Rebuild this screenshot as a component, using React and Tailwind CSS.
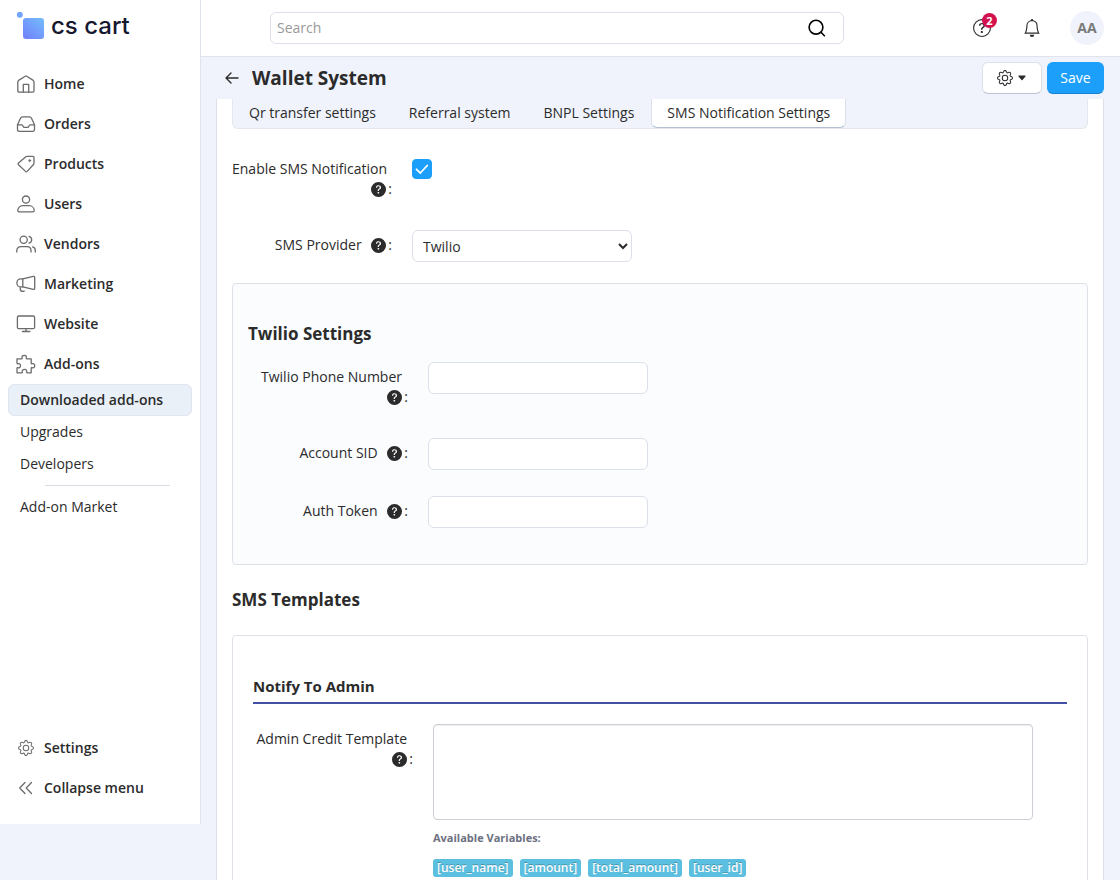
import React, { useState } from 'react';
import {
	BsBell,
	BsCaretDownFill,
	BsGear,
	BsQuestionCircle,
	BsQuestionCircleFill,
} from 'react-icons/bs';

const MenuIcon = ({ children }) => (
	<svg
		viewBox="0 0 20 20"
		className="h-5 w-5 shrink-0 text-[#6b6b6b]"
		fill="none"
		stroke="currentColor"
		strokeWidth="1.3"
		strokeLinecap="round"
		strokeLinejoin="round"
		aria-hidden="true">
		{children}
	</svg>
);

const mainMenu = [
	{
		name: 'Home',
		icon: (
			<>
				<path d="M1.8 16.8V7.9c0-.6.3-1.1.8-1.5L9.2 2.2c.5-.3 1.1-.3 1.6 0l6.4 4.2c.5.4.8.9.8 1.5v8.9c0 .8-.5 1.4-1.3 1.4H3.1c-.8 0-1.3-.6-1.3-1.4z" />
				<path d="M7.3 18.2V10.3h5.4v7.9" />
			</>
		),
	},
	{
		name: 'Orders',
		icon: (
			<>
				<path d="M1.5 10.8l3-6.6c.4-.9 1-1.4 2-1.4h7c1 0 1.6.5 2 1.4l3 6.6v4.7c0 1.1-.7 1.8-1.8 1.8H3.3c-1.1 0-1.8-.7-1.8-1.8z" />
				<path d="M1.5 10.8h4.2c.8 0 1.1.5 1.3 1.2.3.9.8 1.4 1.7 1.4h2.6c.9 0 1.4-.5 1.7-1.4.2-.7.5-1.2 1.3-1.2h4.2" />
			</>
		),
	},
	{
		name: 'Products',
		icon: (
			<>
				<path d="M11 2.3h5.7c.8 0 1.3.5 1.3 1.3v5.7c0 .5-.2.9-.5 1.2l-6.3 6.9c-.5.5-1.2.5-1.7 0l-7-6.7c-.5-.5-.5-1.2 0-1.7l7.3-6.2c.4-.3.8-.5 1.2-.5z" />
				<circle cx="13.7" cy="6.6" r="1" fill="currentColor" strokeWidth="0.6" />
			</>
		),
	},
	{
		name: 'Users',
		icon: (
			<>
				<circle cx="10" cy="5.6" r="3.6" />
				<path d="M1.8 16.6c0-2.8 2.2-4.9 5-4.9h6.4c2.8 0 5 2.1 5 4.9 0 .8-.5 1.2-1.2 1.2H3c-.7 0-1.2-.4-1.2-1.2z" />
			</>
		),
	},
	{
		name: 'Vendors',
		icon: (
			<>
				<circle cx="7.7" cy="5.7" r="3.6" />
				<path d="M13.1 2.3a3.6 3.6 0 0 1 0 6.9M.8 18v-1.4c0-2.3 1.7-4 4-4h6.2c2.3 0 4 1.7 4 4V18M16.6 12.9c1.7.5 2.7 1.9 2.7 3.7V18" />
			</>
		),
	},
	{
		name: 'Marketing',
		icon: (
			<>
				<path d="M6.8 4.9l10.5-2.5c.8-.2 1.4.2 1.4 1v11c0 .8-.6 1.2-1.4 1L6.8 12.9z" />
				<path d="M6.8 4.9H4.9a4 4 0 0 0 0 8h1.9M4.2 13v1.7c0 1.5 1.4 2.7 2.8 2.7.5 0 .9-.1 1.2-.4" />
			</>
		),
	},
	{
		name: 'Website',
		icon: (
			<>
				<rect x="1.4" y="2" width="17.2" height="12.7" rx="1.5" />
				<path d="M10 14.7v2.7M6.4 17.5h7.4" />
			</>
		),
	},
	{
		name: 'Add-ons',
		icon: (
			<path d="M1 4.8h4.5c.7 0 .9-.5.6-1.1-.5-1.2.6-2.4 2.1-2.4s2.6 1.2 2.1 2.4c-.3.6-.1 1.1.6 1.1h4.3v4.3c0 .7.5.9 1.1.6 1.2-.5 2.4.5 2.4 2s-1.2 2.5-2.4 2c-.6-.3-1.1-.1-1.1.6v4.5h-3.9c-.7 0-.9-.5-.6-1.1.5-1.2-.7-2.3-2.2-2.3s-2.7 1.1-2.2 2.3c.3.6.1 1.1-.6 1.1H1v-4.5c0-.7.5-.9 1.1-.6 1.2.5 2.4-.5 2.4-2s-1.2-2.5-2.4-2c-.6.3-1.1.1-1.1-.6z" />
		),
	},
];

const variables = ['[user_name]', '[amount]', '[total_amount]', '[user_id]'];

const tabs = [
	'Qr transfer settings',
	'Referral system',
	'BNPL Settings',
	'SMS Notification Settings',
];

const Logo = () => (
	<a href="#home" className="flex h-[52px] items-center gap-[7px] pl-4">
		<svg viewBox="0 0 28 28" className="h-7 w-7" aria-hidden="true">
			<defs>
				<linearGradient id="logo" x1="1" y1="0" x2="0.2" y2="1">
					<stop offset="0" stopColor="#74bdfb" />
					<stop offset="1" stopColor="#7184fb" />
				</linearGradient>
			</defs>
			<circle cx="3.8" cy="2.8" r="3" fill="#72a6fb" />
			<rect x="7" y="6" width="21" height="21" rx="3" fill="url(#logo)" />
		</svg>
		<span className="font-[Inter,sans-serif] text-2xl font-medium text-[#16182f]">
			cs cart
		</span>
	</a>
);

const Sidebar = () => {
	return (
		<aside className="z-10 flex h-[calc(100vh-56px)] w-[200px] shrink-0 flex-col bg-white pb-4 shadow-[1px_0_0_#dfe4ec]">
			<Logo />
			<nav className="mt-3 flex flex-1 flex-col font-semibold">
				{mainMenu.map(item => (
					<a
						key={item.name}
						href={`#${item.name}`}
						className="flex h-10 items-center gap-2 pl-4">
						<MenuIcon>{item.icon}</MenuIcon>
						{item.name}
					</a>
				))}
				<div className="flex flex-col font-normal">
					<a
						href="#downloaded"
						className="mx-2 flex h-8 items-center rounded-md border border-[#dfe6f0] bg-[#e9f0f8] pl-[11px] font-semibold">
						Downloaded add-ons
					</a>
					<a href="#upgrades" className="flex h-8 items-center pl-5">
						Upgrades
					</a>
					<a href="#developers" className="flex h-8 items-center pl-5">
						Developers
					</a>
					<hr className="mt-[5px] mr-[30px] mb-[5px] ml-[45px] border-[#d9dde3]" />
					<a href="#market" className="flex h-8 items-center pl-5">
						Add-on Market
					</a>
				</div>
				<a
					href="#settings"
					className="mt-auto flex h-10 items-center gap-2 pl-4">
					<span className="flex w-5 justify-center text-[#6b6b6b]">
						<BsGear className="h-4 w-4" />
					</span>
					Settings
				</a>
				<button type="button" className="flex h-10 items-center gap-2 pl-4">
					<MenuIcon>
						<path d="M9 4.5L3.7 10 9 15.5M15.5 4.5L10.2 10l5.3 5.5" />
					</MenuIcon>
					Collapse menu
				</button>
			</nav>
		</aside>
	);
};

const Header = () => {
	return (
		<header className="flex h-[57px] shrink-0 items-center border-b border-[#dfe4ec] bg-white pr-4 pl-[70px]">
			<div className="flex h-8 w-[574px] items-center rounded-md border border-[#dce0ea] pr-4">
				<input
					type="search"
					aria-label="Search"
					placeholder="Search"
					className="min-w-0 flex-1 px-1.5 outline-none placeholder:text-[#999]"
				/>
				<button type="button" aria-label="Find">
					<svg
						viewBox="0 0 20 20"
						className="h-5 w-5 text-black"
						fill="none"
						stroke="currentColor"
						strokeWidth="1.6"
						strokeLinecap="round">
						<circle cx="9" cy="9.2" r="6.9" />
						<path d="M14 14.3l3.4 3.4" />
					</svg>
				</button>
			</div>
			<div className="ml-auto flex items-center">
				<button
					type="button"
					aria-label="Help center"
					className="relative mr-8">
					<BsQuestionCircle className="h-[18px] w-[18px]" />
					<span className="absolute -top-1.5 -right-1.5 flex h-[15px] w-[15px] items-center justify-center rounded-full bg-[#d3114f] text-[11px] font-bold text-white">
						2
					</span>
				</button>
				<button
					type="button"
					aria-label="Notifications"
					className="mr-[29px]">
					<BsBell className="h-[18px] w-[18px]" />
				</button>
				<button
					type="button"
					className="h-[34px] w-[34px] rounded-full bg-[#f0f3fb] text-sm font-bold text-[#7a7a7a]">
					AA
				</button>
			</div>
		</header>
	);
};

const FieldRow = ({ id, label, children }) => {
	return (
		<div className="flex gap-5">
			<label htmlFor={id} className="w-40 shrink-0 py-[5px] text-right">
				<span className="mr-1.5 whitespace-nowrap">{label}</span>{' '}
				<span className="inline-flex items-center gap-0.5 align-top leading-5">
					<BsQuestionCircleFill className="h-[15px] w-[15px]" />:
				</span>
			</label>
			{children}
		</div>
	);
};

const TextField = ({ id, label }) => (
	<FieldRow id={id} label={label}>
		<input
			id={id}
			type="text"
			className="h-8 w-[220px] rounded-md border border-[#dce0ea] bg-white px-2.5"
		/>
	</FieldRow>
);

const SmsSettings = () => {
	const [enabled, setEnabled] = useState(true);

	return (
		<>
			<div className="mt-[25px] flex flex-col gap-[26px]">
				<FieldRow id="enable_sms" label="Enable SMS Notification">
					<span className="relative mt-[5px] h-5 w-5">
						<input
							id="enable_sms"
							type="checkbox"
							checked={enabled}
							onChange={e => setEnabled(e.target.checked)}
							className="peer block h-5 w-5 appearance-none rounded border border-[#dce0ea] checked:border-[#1c9ffb] checked:bg-[#1c9ffb]"
						/>
						<svg
							viewBox="0 0 20 20"
							className="pointer-events-none absolute inset-0 hidden h-5 w-5 peer-checked:block"
							fill="none"
							stroke="#fff"
							strokeWidth="1.8"
							strokeLinecap="round"
							strokeLinejoin="round">
							<path d="M4.5 10.3l3.8 3.7 7-7.5" />
						</svg>
					</span>
				</FieldRow>
				<FieldRow id="provider" label="SMS Provider">
					<select
						id="provider"
						className="h-8 w-[220px] rounded-md border border-[#dce0ea] bg-white pl-1.5">
						<option>Twilio</option>
					</select>
				</FieldRow>
			</div>

			<section className="mt-[21px] rounded border border-[#dee2e8] bg-[#fafcfe] px-[15px] pt-[30px] pb-9">
				<h2 className="mb-2 text-[17px] leading-10 font-bold">
					Twilio Settings
				</h2>
				<div className="flex flex-col gap-[26px]">
					<TextField id="phone" label="Twilio Phone Number" />
					<TextField id="sid" label="Account SID" />
					<TextField id="token" label="Auth Token" />
				</div>
			</section>

			<h2 className="my-[15px] text-[17px] leading-10 font-bold">
				SMS Templates
			</h2>
			<section className="rounded border border-[#dee2e8] px-5 pt-9 pb-9">
				<h3 className="mb-5 border-b-2 border-[#4250a4] pb-0.5 text-[15px] leading-7 font-bold">
					Notify To Admin
				</h3>
				<FieldRow id="admin_credit" label="Admin Credit Template">
					<div className="min-w-0 flex-1">
						<textarea
							id="admin_credit"
							className="block h-24 w-full max-w-[600px] resize-none rounded border border-[#ccd0d6] bg-white p-1.5 shadow-[inset_0_1px_1px_rgba(0,0,0,0.075)]"
						/>
						<p className="mt-2 text-[11px] leading-5 font-bold text-[#6c7080]">
							Available Variables:
						</p>
						<div className="mt-[11px] flex gap-[7px] text-xs leading-[18px] font-semibold text-white">
							{variables.map(name => (
								<span
									key={name}
									className="rounded-[3px] bg-[#5bbfdf] px-1 [text-shadow:0_-1px_0_rgba(0,0,0,0.25)]">
									{name}
								</span>
							))}
						</div>
					</div>
				</FieldRow>
			</section>
		</>
	);
};

const App = () => {
	const [activeTab, setActiveTab] = useState(tabs[3]);

	return (
		<div className="flex h-screen items-start overflow-hidden bg-[#f0f3fb] font-['Open_Sans',sans-serif] text-sm leading-5 text-[#2b2b2b]">
			<Sidebar />
			<div className="flex h-full min-w-0 flex-1 flex-col">
				<Header />
				<div className="flex h-[42px] shrink-0 items-center pr-4 pl-6">
					<a href="#back" aria-label="Back">
						<svg
							viewBox="0 0 16 16"
							className="h-4 w-4"
							fill="none"
							stroke="currentColor"
							strokeWidth="1.4"
							strokeLinecap="round"
							strokeLinejoin="round">
							<path d="M14 8H2M7 3L2 8l5 5" />
						</svg>
					</a>
					<h1 className="ml-3 text-[19px] font-bold">Wallet System</h1>
					<button
						type="button"
						aria-label="Actions"
						className="ml-auto flex h-8 w-[60px] items-center justify-center gap-1 rounded-md border border-[#dce0ea] border-b-[#bcc6d6] bg-white">
						<BsGear className="h-4 w-4" />
						<BsCaretDownFill className="h-2.5 w-2.5" />
					</button>
					<button
						type="button"
						className="ml-[5px] h-8 w-[57px] rounded-md border border-[#1c9ffb] border-b-[#1784d3] bg-[#1c9ffb] text-white">
						Save
					</button>
				</div>
				<main className="mx-4 min-h-0 flex-1 overflow-hidden border-x border-[#dce0ea] bg-white px-[15px]">
					<div
						role="tablist"
						className="flex h-[30px] gap-px rounded-b-md border border-t-0 border-[#e4e8ee] bg-[#f0f3fb]">
						{tabs.map(tab => (
							<button
								key={tab}
								type="button"
								role="tab"
								aria-selected={activeTab === tab}
								onClick={() => setActiveTab(tab)}
								className={`rounded-b-md border border-t-0 px-[15px] pb-px ${
									activeTab === tab
										? 'border-[#dce0ea] border-b-[#b4c0d2] bg-white'
										: 'border-transparent'
								}`}>
								{tab}
							</button>
						))}
					</div>
					<SmsSettings />
				</main>
			</div>
		</div>
	);
};

export default App;
